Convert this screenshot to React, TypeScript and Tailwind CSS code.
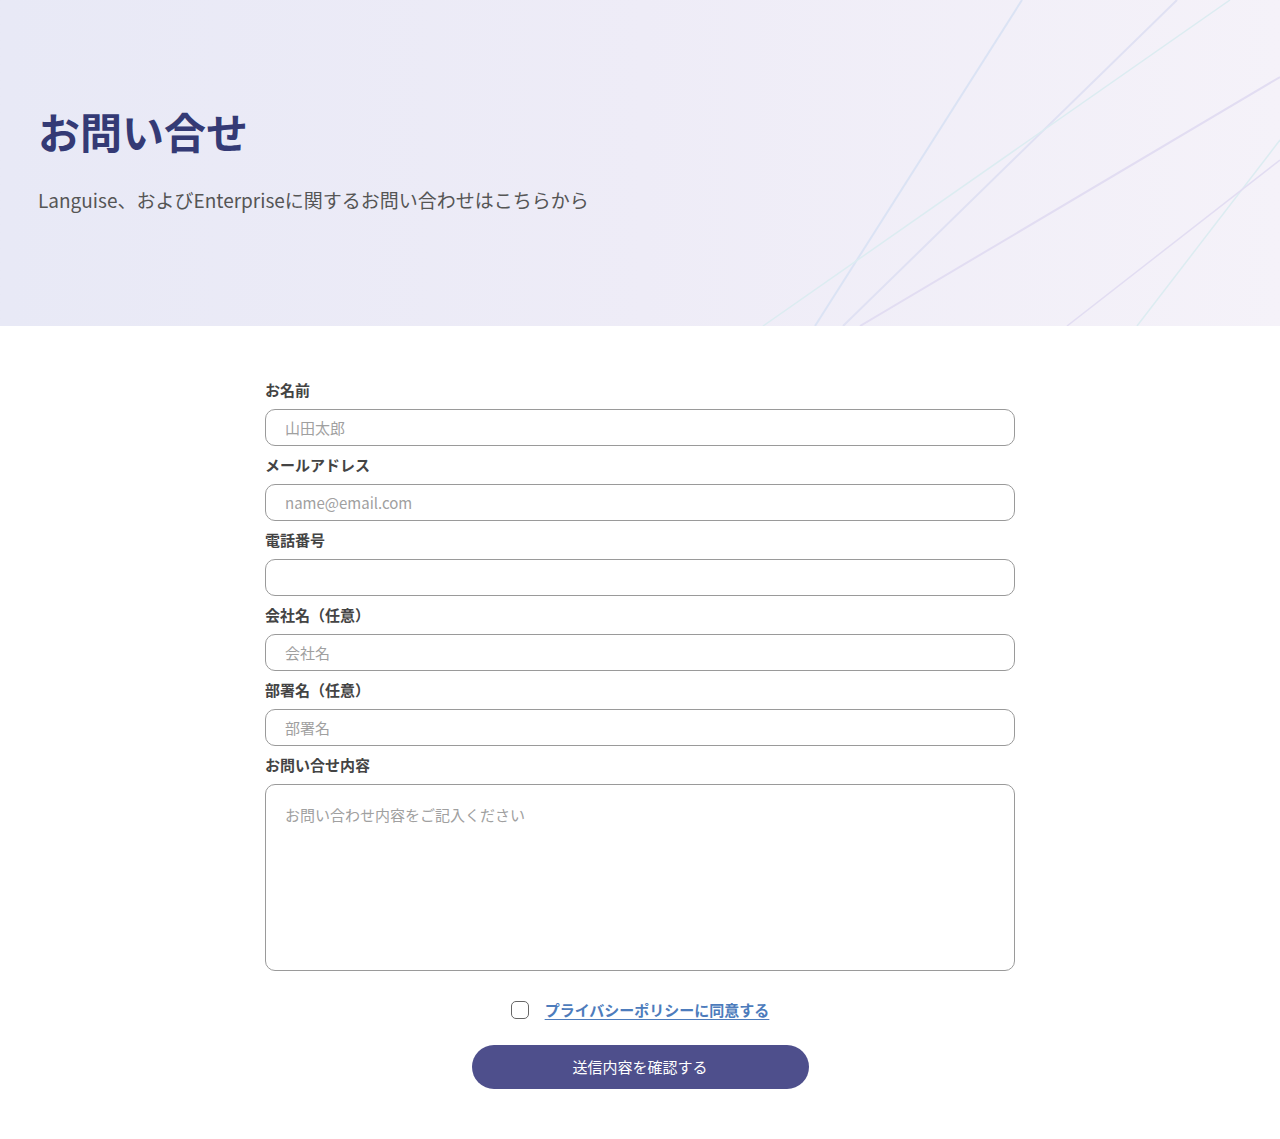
import { useState } from "react";

const font = { fontFamily: '"Noto Sans CJK JP", "Noto Sans", sans-serif' };

const fields = [
  { label: "お名前", placeholder: "山田太郎", type: "text" },
  { label: "メールアドレス", placeholder: "name@email.com", type: "email" },
  { label: "電話番号", placeholder: "", type: "tel" },
  { label: "会社名（任意）", placeholder: "会社名", type: "text" },
  { label: "部署名（任意）", placeholder: "部署名", type: "text" },
];

const HeroLines = () => (
  <svg
    className="absolute inset-0 h-full w-full"
    viewBox="0 0 1280 326"
    preserveAspectRatio="none"
    fill="none"
  >
    <line x1="1022" y1="0" x2="815" y2="326" stroke="#dbe3f4" strokeWidth="2" />
    <line x1="1177" y1="0" x2="843" y2="326" stroke="#e0e1f3" strokeWidth="2" />
    <line x1="1230" y1="0" x2="763" y2="326" stroke="#dcecf1" strokeWidth="1.5" />
    <line x1="1280" y1="77" x2="860" y2="326" stroke="#e2ddf2" strokeWidth="2" />
    <line x1="1280" y1="140" x2="1137" y2="326" stroke="#dcecf1" strokeWidth="1.5" />
    <line x1="1280" y1="160" x2="1067" y2="326" stroke="#e2ddf2" strokeWidth="1.5" />
  </svg>
);

const App = () => {
  const [agree, setAgree] = useState(false);

  return (
    <div className="min-h-screen bg-white" style={font}>
      <header className="relative h-[326px] overflow-hidden bg-gradient-to-r from-[#e8e9f6] via-[#eeecf7] to-[#f5f2f9]">
        <HeroLines />
        <div className="relative px-[38px] pt-[103px]">
          <h1 className="text-[42px] font-bold leading-[56px] text-[#343a75]">
            お問い合せ
          </h1>
          <p className="mt-[27px] text-[19px] leading-[28px] text-[#555]">
            Languise、およびEnterpriseに関するお問い合わせはこちらから
          </p>
        </div>
      </header>

      <main className="mx-auto w-[750px] pt-[54px] pb-[50px]">
        <form onSubmit={(e) => e.preventDefault()} className="flex flex-col">
          <div className="flex flex-col gap-[9px]">
            {fields.map((f) => (
              <div key={f.label} className="flex flex-col">
                <label className="mb-[9px] text-[15px] font-bold leading-[20px] text-[#444]">
                  {f.label}
                </label>
                <input
                  type={f.type}
                  placeholder={f.placeholder}
                  className="h-[37px] w-full rounded-[10px] border border-[#9a9a9a] bg-white px-[19px] text-[15px] text-[#333] placeholder:text-[#a0a0a0] outline-none"
                />
              </div>
            ))}
            <div className="flex flex-col">
              <label className="mb-[9px] text-[15px] font-bold leading-[20px] text-[#444]">
                お問い合せ内容
              </label>
              <textarea
                placeholder="お問い合わせ内容をご記入ください"
                className="h-[187px] w-full resize-none rounded-[10px] border border-[#9a9a9a] bg-white px-[19px] pt-[19px] text-[15px] leading-[22px] text-[#333] placeholder:text-[#a0a0a0] outline-none"
              />
            </div>
          </div>

          <div className="mt-[29px] flex items-center justify-center gap-[16px]">
            <button
              type="button"
              onClick={() => setAgree(!agree)}
              className={`h-[18px] w-[18px] rounded-[5px] border-[1.5px] border-[#666] ${
                agree ? "bg-[#4e4f8c]" : "bg-white"
              }`}
            />
            <a
              href="#"
              className="text-[15px] font-bold leading-[20px] text-[#4d7cbc] underline underline-offset-[3px]"
            >
              プライバシーポリシーに同意する
            </a>
          </div>

          <div className="mt-[25px] flex justify-center">
            <button
              type="submit"
              className="h-[44px] w-[337px] rounded-[22px] bg-[#4e4f8c] text-[15px] text-white"
            >
              送信内容を確認する
            </button>
          </div>
        </form>
      </main>
    </div>
  );
};

export default App;
